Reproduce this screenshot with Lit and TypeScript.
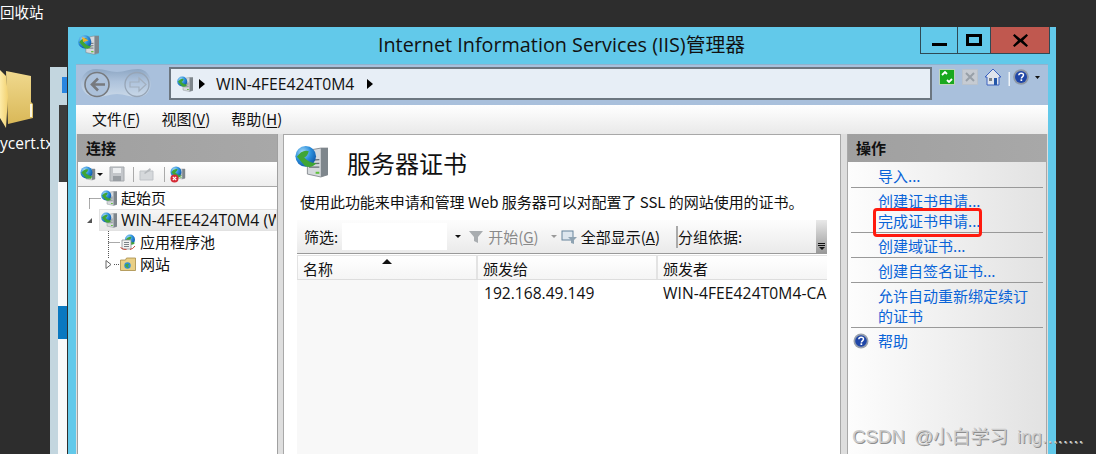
import { LitElement, html, css, svg } from "lit";
import { customElement } from "lit/decorators.js";

const globe = (x: number, y: number, r: number) => svg`
  <defs><radialGradient id="gl" cx=".35" cy=".3" r=".8"><stop offset="0" stop-color="#a8dcf8"/><stop offset=".5" stop-color="#2b8fdc"/><stop offset="1" stop-color="#0b4fa0"/></radialGradient></defs>
  <circle cx=${x} cy=${y} r=${r} fill="url(#gl)"/>
  <path d="M${x - r * 0.85} ${y + r * 0.05}q${r * 0.5} ${-r * 0.75} ${r * 1.15} ${-r * 0.55}q${-r * 0.15} ${r * 0.5} ${-r * 0.45} ${r * 0.6}q${r * 0.55} ${r * 0.6} ${r * 1.2} ${r * 0.55}q${-r * 0.55} ${r * 0.6} ${-r * 1.15} ${r * 0.25}z" fill="#3fa535"/>`;

const tower = (x: number, y: number, w: number, h: number) => svg`
  <path d="M${x} ${y + h * 0.08}L${x + w * 0.65} ${y}H${x + w}V${y + h * 0.92}L${x + w * 0.65} ${y + h}L${x} ${y + h * 0.9}z" fill="#d5d9dc" stroke="#7b8085" stroke-width=".4"/>
  <path d="M${x + w * 0.65} ${y}H${x + w}V${y + h * 0.92}L${x + w * 0.65} ${y + h}z" fill="#7e868c"/>
  <path d="M${x + w * 0.08} ${y + h * 0.42}L${x + w * 0.58} ${y + h * 0.4}M${x + w * 0.08} ${y + h * 0.54}L${x + w * 0.58} ${y + h * 0.53}M${x + w * 0.08} ${y + h * 0.66}L${x + w * 0.58} ${y + h * 0.66}" stroke="#666d73" stroke-width=${h * 0.05}/>
  <rect x=${x + w * 0.4} y=${y + h * 0.82} width=${w * 0.18} height=${h * 0.07} fill="#5fc23c"/>`;

const serverIcon = (size: number) => html`<svg class="ico" width=${size} height=${size} viewBox="0 0 16 16">
  ${tower(6, 1.5, 10, 14)}${globe(5.200, 5.500, 5)}</svg>`;

const helpIcon = (size: number) => html`<svg class="ico" width=${size} height=${size} viewBox="0 0 16 16">
  <circle cx="8" cy="8" r="7.500" fill="#98a0ac"/><circle cx="8" cy="8" r="5.800" fill="#1f46a8"/>
  <path d="M5.800 6.200c.2-2.600 4.700-2.700 4.700-.1 0 1.800-2.100 1.700-2.100 3.400" fill="none" stroke="#fff" stroke-width="1.500"/>
  <rect x="7.500" y="10.300" width="1.700" height="1.700" fill="#fff"/></svg>`;

const folderIcon = html`<svg class="ico" width="16" height="16" viewBox="0 0 16 16">
  <path d="M.5 4h5l1-2h9v12.500H.5z" fill="#e9cf85" stroke="#a68b46" stroke-width=".8"/>
  <circle cx="7.500" cy="9.500" r="3.200" fill="#2f8fd8"/><path d="M5 9q2-2 4-1l-1 2 1 2q-3 0-4-3z" fill="#46a83e"/></svg>`;

const poolIcon = html`<svg class="ico" width="16" height="16" viewBox="0 0 16 16">
  ${globe(10, 5.500, 5)}
  <path d="M2 6h9v9H2z" fill="#f2f2f2" stroke="#8a8f94" stroke-width=".8"/>
  <path d="M4 8.500h5M4 10.500h5M4 12.500h5" stroke="#7c8288"/>
  <path d="M.5 13.500q3 2.500 6 2M15 12q-2 3-5 3.500" fill="none" stroke="#c8483e" stroke-width="1"/></svg>`;

const conn1 = html`<svg class="ico" width="23" height="22" viewBox="0 0 23 22"><path d="M11.500 11.500H23M11.500 11.500V22" stroke="#555" stroke-dasharray="1 1" fill="none"/></svg>`;
const conn2 = html`<svg class="ico" width="21" height="22" viewBox="0 0 21 22"><path d="M9 14l5-5v5z" fill="#555"/></svg>`;
const conn3 = html`<svg class="ico" width="42" height="22" viewBox="0 0 42 22"><path d="M30.500 0V22M30.500 11.500H42" stroke="#555" stroke-dasharray="1 1" fill="none"/></svg>`;
const conn4 = html`<svg class="ico" width="42" height="22" viewBox="0 0 42 22"><path d="M30.500 0V6M36 11.500H42" stroke="#555" stroke-dasharray="1 1" fill="none"/><path d="M28 7.500l5 4-5 4z" fill="#fff" stroke="#555" stroke-width=".9"/></svg>`;

@customElement("app-root")
export class AppRoot extends LitElement {
  static styles = css`
    :host {
      display: block;
      position: relative;
      width: 1096px;
      height: 454px;
      overflow: hidden;
      background: #2d2d2d;
      font-family: "Noto Sans CJK SC", "Liberation Sans", sans-serif;
      color: #111;
    }
    .ico { display: block; flex: none; }
    .recycle { position: absolute; left: 0; top: 1px; font-size: 14.500px; line-height: 22px; color: #fff; white-space: nowrap; }
    .desk-folder { position: absolute; left: 0; top: 68px; }
    .desk-file { position: absolute; left: 0; top: 132px; white-space: nowrap; font: 15.500px/22px "Open Sans", sans-serif; color: #fff; }
    .back-win { position: absolute; left: 50px; top: 67px; width: 18px; height: 387px; background: #c3d6df; }
    .back-win i { position: absolute; display: block; }
    .back-white { left: 8px; top: 115px; width: 9px; height: 272px; background: #f8f9fa; }
    .back-dark { left: 9px; top: 38px; width: 8px; height: 77px; background: #3c3c3c; }
    .back-blue { left: 8px; top: 239px; width: 9px; height: 33px; background: #0a78c0; }
    .back-tab { left: 12px; top: 10px; width: 5px; height: 16px; background: #2a86e0; }
    .back-line { left: 17px; top: 0; width: 1px; height: 387px; background: #2d2d2d; }

    .window {
      position: absolute;
      left: 68px; top: 27px; width: 988px; height: 427px;
      background: #62c9ea;
      display: flex; flex-direction: column;
      padding: 0 8px; box-sizing: border-box;
    }
    .titlebar { height: 37px; display: flex; align-items: center; position: relative; flex: none; }
    .app-ico { position: absolute; left: 2px; top: 7px; }
    .title { flex: 1; text-align: center; font: 19.800px/36px "Open Sans", "Noto Sans CJK SC", sans-serif; color: #111; margin-top: -2px; margin-left: -1px; }
    .wctl { position: absolute; right: -2px; top: 0; height: 27px; display: flex; border: 1px solid #2e4a55; border-top: 0; box-sizing: border-box; }
    .wctl div { display: flex; align-items: center; justify-content: center; border-left: 1px solid #2e4a55; box-sizing: border-box; }
    .wctl div:first-child { border-left: 0; width: 36px; }
    .wctl .max { width: 33px; }
    .wctl .close { width: 59px; background: #c0584f; }

    .client { flex: 1; display: flex; flex-direction: column; min-height: 0; background: #dfdfdf; }
    .addr { height: 41px; flex: none; background: #a9c0dc; border-top: 1px solid #8fb3cf; box-sizing: border-box; display: flex; align-items: flex-start; padding-top: 2px; }
    .nav { margin-left: 4px; width: 72px; height: 33px; flex: none; }
    .crumb { margin-left: 17px; width: 763px; height: 33px; box-sizing: border-box; background: #e7eef6; border: 2px solid #6c7680; display: flex; align-items: center; padding-left: 6px; font: 15.750px "Open Sans", sans-serif; flex: none; }
    .tri { width: 0; height: 0; border-left: 6px solid #000; border-top: 5px solid transparent; border-bottom: 5px solid transparent; flex: none; }
    .t1 { margin: 0 11px 0 6px; }
    .t2 { margin-left: 13px; }
    .tools { margin: 2px 0 0 7px; flex: none; display: block; }
    .menu { height: 29px; flex: none; background: linear-gradient(#fff, #e9e9e9); display: flex; align-items: center; padding-left: 16px; gap: 21px; font-size: 15px; padding-bottom: 3px; box-sizing: border-box; }
    .menu u { text-underline-offset: 2px; }

    .panes { flex: 1; display: flex; gap: 5px; padding: 0 1px; min-height: 0; background: #dedede; }
    .pane { display: flex; flex-direction: column; min-height: 0; box-sizing: border-box; }
    .side { width: 201px; background: #fff; border: 1px solid #a0a0a0; border-bottom: 0; border-top: 0; }
    .side-h { height: 28px; flex: none; background: linear-gradient(90deg, #a0a0a0, #a8a8a8); display: flex; align-items: center; padding: 0 0 2px 8px; font-size: 15px; font-weight: 700; color: #111; box-sizing: border-box; }
    .conn-tools { height: 25px; flex: none; display: flex; align-items: center; padding-left: 2px; background: linear-gradient(#fff, #eee); border-bottom: 1px solid #a8a8a8; box-sizing: border-box; }
    .sep { width: 1px; height: 15px; background: #aaa; flex: none; }
    .caret { width: 0; height: 0; border-top: 3px solid #111; border-left: 3px solid transparent; border-right: 3px solid transparent; flex: none; }
    .ct-caret { margin: 0 6px 0 1px; }
    .ct-s1 { margin: 0 5px 0 8px; }
    .ct-s2 { margin: 0 5px 0 10px; }
    .tree { flex: 1; font-size: 15px; color: #111; overflow: hidden; }
    .node { height: 22px; display: flex; align-items: center; white-space: nowrap; box-sizing: border-box; }
    .node > span { margin-bottom: 2px; }
    .n1 .ico + .ico { margin-right: 4px; }
    .n3 .ico + .ico { margin-right: 4px; }
    .sel { flex: 1; min-width: 0; height: 22px; display: flex; align-items: center; gap: 4px; background: linear-gradient(#f6f6f6, #e6e6e6); border: 1px solid #e2e2e2; box-sizing: border-box; padding-left: 1px; font: 15.750px "Open Sans", sans-serif; overflow: hidden; white-space: nowrap; }
    .center { flex: none; width: 558px; background: #fff; border: 1px solid #a8a8a8; border-bottom: 0; }
    .head { display: flex; align-items: flex-start; padding: 10px 0 0 11px; height: 44px; box-sizing: border-box; flex: none; }
    .head h1 { margin: 2px 0 0 19px; font-size: 24px; line-height: 32px; font-weight: 400; color: #111; }
    .desc { margin: 13px 0 0 16px; font-size: 15px; line-height: 20px; white-space: nowrap; color: #111; height: 20px; letter-spacing: -.04px; }
    .grid { margin: 8px 13px 0 13px; flex: 1; min-height: 0; display: flex; flex-direction: column; }
    .filter { height: 34px; flex: none; background: linear-gradient(#fdfdfd, #eaeaea); display: flex; align-items: center; position: relative; font-size: 15px; padding-left: 7px; border-bottom: 1px solid #9a9a9a; box-sizing: border-box; white-space: nowrap; }
    .f-input { width: 105px; height: 27px; margin-left: 4px; background: #fff; flex: none; }
    .f-caret { margin-left: 8px; }
    .funnel { margin: 0 3px 0 6px; flex: none; }
    .dis { color: #8a8a8a; }
    .f-caret2 { margin: 0 4px 0 12px; border-top-color: #999; }
    .showall { margin-right: 2px; flex: none; }
    .f-sep { width: 2px; height: 22px; background: #aaa; margin: 0 0 0 16px; flex: none; }
    .grip { position: absolute; right: 0; top: 0; bottom: 0; width: 11px; background: linear-gradient(#e9e9e9, #999); display: flex; flex-direction: column; align-items: center; justify-content: flex-end; padding-bottom: 3px; box-sizing: border-box; }
    .grip b { display: block; width: 7px; height: 1px; background: #111; margin-bottom: 1px; }
    .cols { height: 25px; flex: none; display: grid; grid-template-columns: 180px 180px 1fr; background: #fff; border-top: 1px solid #e3e3e3; border-bottom: 1px solid #ddd; border-left: 1px solid #e3e3e3; font-size: 15px; box-sizing: border-box; margin-top: 1px; }
    .cols > div { padding: 1px 0 0 5px; display: flex; align-items: center; border-right: 2px solid #e3e3e3; position: relative; background: linear-gradient(#fff, #f5f5f5); }
    .cols > div:last-child { border-right: 0; }
    .sort { position: absolute; left: 84px; top: 3px; width: 0; height: 0; border-left: 5px solid transparent; border-right: 5px solid transparent; border-bottom: 5px solid #111; }
    .rows { flex: 1; display: grid; grid-template-columns: 181px 179px 1fr; font: 15.600px/25px "Open Sans", sans-serif; overflow: hidden; white-space: nowrap; }
    .rows > div { padding: 1px 0 0 6px; overflow: hidden; }
    .rows .first { background: #f8f8f8; }
    .cert-by { letter-spacing: .1px; }
    .actions { width: 200px; margin-left: 1px; background: linear-gradient(90deg, #fdfdfd, #e2e2e2); border: 1px solid #a8a8a8; border-bottom: 0; border-top: 0; }
    .acts { font-size: 15px; line-height: 20px; color: #0a64d8; position: relative; }
    .act { margin-left: 30px; padding: 3px 0 1px; max-width: 160px; }
    .act.first { padding-top: 4px; }
    .act.tail { padding-bottom: 0; }
    .act.cont { padding-top: 0; }
    .line { border-bottom: 1px solid #999; margin: 0 3px; height: 0; }
    .help { display: flex; align-items: center; gap: 9px; padding: 3px 0 1px 5px; }
    .hilite { position: absolute; left: 25px; top: 46px; width: 109px; height: 29px; border: 3px solid #ff1a0e; border-radius: 4px; box-sizing: border-box; }
    .wm { position: absolute; left: 852px; top: 425px; font: 18.700px/24px "Liberation Sans", "Noto Sans CJK SC", sans-serif; color: #cdcdcd; text-shadow: 1px 1px 0 #8e8e8e; white-space: nowrap; word-spacing: 4px; }
  `;

  render() {
    return html`
      <div class="recycle">回收站</div>
      <svg class="desk-folder" width="40" height="64" viewBox="0 0 40 64">
        <defs><linearGradient id="fb" x1="0" y1="0" x2="0" y2="1"><stop offset="0" stop-color="#f0d98e"/><stop offset="1" stop-color="#d9b858"/></linearGradient>
        <linearGradient id="ff" x1="0" y1="0" x2="1" y2="0"><stop offset="0" stop-color="#fdeba8"/><stop offset="1" stop-color="#f2d272"/></linearGradient></defs>
        <path d="M6 3l25 5v26l2 2v14L8 56z" fill="url(#fb)"/>
        <path d="M0 2l6 6 2 20-2 32-6-10z" fill="url(#ff)"/>
        <rect x="30" y="36" width="2" height="13" fill="#fbf6df"/>
      </svg>
      <div class="desk-file">ycert.txt</div>
      <div class="back-win"><i class="back-white"></i><i class="back-dark"></i><i class="back-blue"></i><i class="back-tab"></i><i class="back-line"></i></div>

      <div class="window">
        <div class="titlebar">
          <svg class="ico app-ico" width="21" height="21" viewBox="0 0 16 16">${tower(6, 1.500, 10, 14)}${globe(5.200, 6, 5)}<path d="M3 2l5 3-4 1z" fill="#f0b030"/></svg>
          <div class="title">Internet Information Services (IIS)管理器</div>
          <div class="wctl">
            <div><svg width="16" height="16" viewBox="0 0 16 16"><rect x="1" y="11" width="15" height="3" fill="#000"/></svg></div>
            <div class="max"><svg width="16" height="12" viewBox="0 0 16 12"><rect x="1.500" y="1.500" width="13" height="9" fill="none" stroke="#000" stroke-width="3"/></svg></div>
            <div class="close"><svg width="15" height="13" viewBox="0 0 15 13"><path d="M1.500 0l6 5 6-5 1.500 1.500-5 5 5 5-1.500 1.500-6-5-6 5-1.500-1.500 5-5-5-5z" fill="#000"/></svg></div>
          </div>
        </div>
        <div class="client">
          <div class="addr">
            <svg class="nav" viewBox="0 0 72 33">
              <defs><linearGradient id="nv" x1="0" y1="0" x2="0" y2="1"><stop offset="0" stop-color="#8ea7c4"/><stop offset=".45" stop-color="#aec3dc"/><stop offset="1" stop-color="#c9d8e8"/></linearGradient></defs>
              <path d="M16 2c10 0 13 3 21 3s11-3 21-3c8 0 13 7 13 14s-5 14-13 14c-10 0-13-3-21-3s-11 3-21 3C7 30 1 23 1 16S7 2 16 2z" fill="url(#nv)"/>
              <circle cx="17" cy="17.500" r="12" fill="#acc1da" stroke="#777a7e" stroke-width="1.600"/>
              <path d="M25 17.500H12m6-6l-6 6 6 6" fill="none" stroke="#777a7e" stroke-width="2.600"/>
              <circle cx="57" cy="17.500" r="12" fill="none" stroke="#97a5b6" stroke-width="1.300"/>
              <path d="M50 15h9v-4l7 6.500-7 6.500v-4h-9z" fill="none" stroke="#a2afbe" stroke-width="1.200"/>
            </svg>
            <div class="crumb">${serverIcon(16)}<span class="tri t1"></span><span>WIN-4FEE424T0M4</span><span class="tri t2"></span></div>
            <svg class="tools" width="102" height="18" viewBox="0 0 102 18">
              <rect x=".5" y=".5" width="15" height="15" fill="#19a81f" stroke="#bcd3ba"/>
              <path d="M3 6l3-3 2 2M13 10l-3 3-2-2" fill="none" stroke="#fff" stroke-width="1.800"/>
              <rect x="23.500" y=".5" width="15" height="15" fill="#c6cbd2" stroke="#bac2cb"/>
              <path d="M27 4l8 8m0-8l-8 8" stroke="#98a0a8" stroke-width="2"/>
              <path d="M46 8l8-8 8 8h-2v8H48V8z" fill="#dfe4ec" stroke="#3d63c0"/>
              <rect x="55" y="9" width="3" height="7" fill="#2456a8"/>
              <rect x="50" y="9" width="3" height="3" fill="#7c8288"/>
              <rect x="69.500" y="3" width="1.500" height="14" fill="#eef3f8"/>
              <circle cx="82" cy="8" r="7.800" fill="#8e98a6"/><circle cx="82" cy="8" r="6" fill="#1f46a8"/>
              <path d="M79.800 6.200c.2-2.600 4.700-2.700 4.700-.1 0 1.800-2.100 1.700-2.100 3.400" fill="none" stroke="#fff" stroke-width="1.500"/>
              <rect x="81.500" y="10.300" width="1.700" height="1.700" fill="#fff"/>
              <path d="M96 7h5l-2.500 3z" fill="#111"/>
            </svg>
          </div>
          <div class="menu">
            <span>文件(<u>F</u>)</span><span>视图(<u>V</u>)</span><span>帮助(<u>H</u>)</span>
          </div>
          <div class="panes">
            <div class="pane side">
              <div class="side-h">连接</div>
              <div class="conn-tools">
                <svg class="ico" width="16" height="16" viewBox="0 0 16 16">${tower(6, 3, 9, 11)}${globe(6.500, 6.500, 6)}</svg><span class="caret ct-caret"></span>
                <svg class="ico" width="16" height="16" viewBox="0 0 16 16"><path d="M1 1h14v14H1z" fill="#c3c6ca" stroke="#a5a9ad"/><rect x="4" y="2" width="8" height="5" fill="#eceef0"/><rect x="4" y="10" width="8" height="5" fill="#989da2"/></svg>
                <span class="sep ct-s1"></span>
                <svg class="ico" width="15" height="16" viewBox="0 0 15 16"><path d="M1 5h13v9H1z" fill="#d5d8db" stroke="#bfc3c7"/><path d="M5 7l6-5 1 2-6 4z" fill="#b5b9bd"/></svg>
                <span class="sep ct-s2"></span>
                <svg class="ico" width="16" height="17" viewBox="0 0 16 17">${tower(7, 3, 8, 10)}${globe(6, 6, 5.500)}<circle cx="4.500" cy="12.500" r="4" fill="#d42a35"/><path d="M2.800 10.800l3.400 3.400m0-3.400l-3.400 3.400" stroke="#fff" stroke-width="1.200"/></svg>
              </div>
              <div class="tree">
                <div class="node n1">${conn1}${serverIcon(16)}<span>起始页</span></div>
                <div class="node n2">${conn2}<div class="sel">${serverIcon(16)}<span>WIN-4FEE424T0M4 (W</span></div></div>
                <div class="node n3">${conn3}${poolIcon}<span>应用程序池</span></div>
                <div class="node n3">${conn4}${folderIcon}<span>网站</span></div>
              </div>
            </div>

            <div class="pane center">
              <div class="head">${serverIcon(33)}<h1>服务器证书</h1></div>
              <div class="desc">使用此功能来申请和管理 Web 服务器可以对配置了 SSL 的网站使用的证书。</div>
              <div class="grid">
                <div class="filter">
                  <span>筛选:</span>
                  <span class="f-input"></span>
                  <span class="caret f-caret"></span>
                  <svg class="funnel" width="18" height="16" viewBox="0 0 18 16"><path d="M2 2h14l-5 6v6l-4-2V8z" fill="#a9adb0"/></svg>
                  <span class="dis">开始(<u>G</u>)</span>
                  <span class="caret f-caret2"></span>
                  <svg class="showall" width="18" height="16" viewBox="0 0 18 16"><rect x="1" y="2" width="11" height="9" fill="#dde6ee" stroke="#67849c"/><path d="M7 8h9l-3 3v4l-3-1v-3z" fill="#8fa3b2"/></svg>
                  <span>全部显示(<u>A</u>)</span>
                  <span class="f-sep"></span>
                  <span>分组依据:</span>
                  <div class="grip"><b></b><b></b><span class="caret"></span></div>
                </div>
                <div class="cols">
                  <div>名称<span class="sort"></span></div>
                  <div>颁发给</div>
                  <div>颁发者</div>
                </div>
                <div class="rows">
                  <div class="first"></div>
                  <div>192.168.49.149</div>
                  <div class="cert-by">WIN-4FEE424T0M4-CA</div>
                </div>
              </div>
            </div>

            <div class="pane actions">
              <div class="side-h">操作</div>
              <div class="acts">
                <div class="act first">导入...</div><div class="line"></div>
                <div class="act tail">创建证书申请...</div>
                <div class="act cont">完成证书申请...</div><div class="line"></div>
                <div class="act">创建域证书...</div><div class="line"></div>
                <div class="act">创建自签名证书...</div><div class="line"></div>
                <div class="act">允许自动重新绑定续订的证书</div><div class="line"></div>
                <div class="help">${helpIcon(16)}<span>帮助</span></div>
                <div class="hilite"></div>
              </div>
            </div>
          </div>
        </div>
      </div>
      <div class="wm">CSDN @小白学习 ing........</div>
    `;
  }
}
